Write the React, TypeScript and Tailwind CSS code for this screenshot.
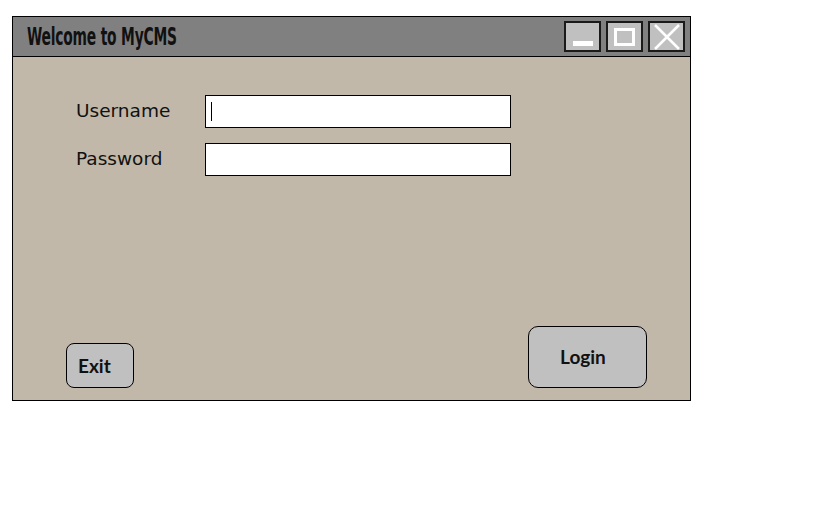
import { useState } from "react";

const TitleButton = ({ kind }: { kind: "min" | "max" | "close" }) => {
  return (
    <button className="w-[37px] h-[31px] bg-[#c0c0c0] border-2 border-[#1a1a1a] flex items-center justify-center">
      {kind === "min" && (
        <svg width="25" height="22" viewBox="0 0 25 22">
          <rect x="3" y="15" width="20" height="5" fill="#fff" />
        </svg>
      )}
      {kind === "max" && (
        <svg width="25" height="22" viewBox="0 0 25 22">
          <rect x="3.5" y="3.5" width="18" height="15" fill="none" stroke="#fff" strokeWidth="3" />
        </svg>
      )}
      {kind === "close" && (
        <svg width="28" height="26" viewBox="0 0 28 26">
          <path d="M2 1 L26 25 M26 1 L2 25" stroke="#fff" strokeWidth="2.5" />
        </svg>
      )}
    </button>
  );
};

export default function App() {
  const [username, setUsername] = useState("");
  const [password, setPassword] = useState("");

  return (
    <div className="w-[822px] h-[507px] bg-white pl-3 pt-4">
      <div className="w-[679px] h-[385px] border border-black bg-[#c1b8aa] flex flex-col">
        {/* title bar */}
        <div className="h-[40px] bg-[#808080] border-b border-black flex items-center justify-between pl-[14px] pr-[5px]">
          <span
            className="inline-block origin-left scale-x-[0.615] text-[25px] font-bold text-[#111] tracking-[-0.3px] mt-[1px]"
            style={{ fontFamily: '"DejaVu Sans Condensed", "DejaVu Sans", sans-serif' }}
          >
            Welcome to MyCMS
          </span>
          <div className="flex gap-[5px]">
            <TitleButton kind="min" />
            <TitleButton kind="max" />
            <TitleButton kind="close" />
          </div>
        </div>

        {/* body */}
        <div className="flex-1 flex flex-col justify-between pl-[53px] pr-[43px] pt-[38px] pb-[12px]">
          <div className="flex flex-col gap-[15px] pl-[10px] font-['DejaVu_Sans',sans-serif] text-[18.5px] text-[#111]">
            <div className="flex items-center">
              <label className="w-[129px] -mt-[2px]">Username</label>
              <div className="relative">
                <input
                  value={username}
                  onChange={(e) => setUsername(e.target.value)}
                  className="w-[306px] h-[33px] bg-white border border-black outline-none px-[6px] text-[16px]"
                />
                {username === "" && (
                  <span className="absolute left-[6px] top-[7px] w-[1px] h-[19px] bg-black" />
                )}
              </div>
            </div>
            <div className="flex items-center">
              <label className="w-[129px] -mt-[2px]">Password</label>
              <input
                type="password"
                value={password}
                onChange={(e) => setPassword(e.target.value)}
                className="w-[306px] h-[33px] bg-white border border-black outline-none px-[6px] text-[16px]"
              />
            </div>
          </div>

          <div
            className="flex items-end justify-between font-bold text-[19px] text-[#111]"
            style={{ fontFamily: "Lato, sans-serif" }}
          >
            <button className="w-[68px] h-[45px] bg-[#c0c0c0] border border-black rounded-[8px] text-left pl-[11px] pt-[2px]">
              Exit
            </button>
            <button className="w-[119px] h-[62px] bg-[#c0c0c0] border border-black rounded-[10px] text-left pl-[31px]">
              Login
            </button>
          </div>
        </div>
      </div>
    </div>
  );
}
